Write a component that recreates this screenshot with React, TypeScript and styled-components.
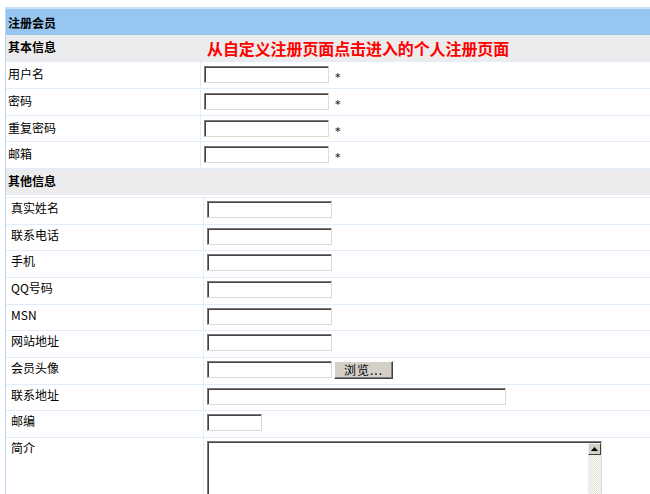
import React from 'react';
import styled, { createGlobalStyle } from 'styled-components';

const GlobalStyle = createGlobalStyle`
  html, body {
    margin: 0;
    padding: 0;
    overflow: hidden;
    background: #ffffff;
  }
  body {
    font-family: "Noto Sans CJK SC", "DejaVu Sans", sans-serif;
    font-size: 12px;
    color: #000;
  }
`;

const LINE = '#e1edfa';

const Frame = styled.div`
  margin: 7px 0 0 5px;
  border-top: 2px solid #c9e0f6;
  border-left: 1px solid #bcd8f3;
`;

const TitleBar = styled.div`
  height: 26px;
  background: #97c7f0;
  padding-left: 2px;
  display: flex;
  align-items: center;
  font-weight: bold;
  font-size: 12px;
`;

const Section = styled.div<{ $gap?: number }>`
  height: 26px;
  background: #ececec;
  display: flex;
  align-items: flex-start;
  margin-bottom: ${p => p.$gap ?? 0}px;
  border-bottom: ${p => (p.$gap ? 'none' : `1px solid ${LINE}`)};
`;

const SectionLabel = styled.div`
  width: 195px;
  padding: 5px 0 0 2px;
  box-sizing: border-box;
  font-weight: bold;
  line-height: 14px;
`;

const Notice = styled.div`
  padding: 3px 0 0 6px;
  color: #ff0000;
  font-size: 16px;
  font-weight: bold;
  line-height: 20px;
  letter-spacing: -0.1px;
`;

const Group = styled.div`
  border-top: 1px solid ${LINE};
`;

const Row = styled.div<{ $h: number }>`
  display: flex;
  box-sizing: border-box;
  height: ${p => p.$h}px;
  border-bottom: 1px solid ${LINE};
`;

const Label = styled.div<{ $w: number; $indent: number; $top: number }>`
  width: ${p => p.$w}px;
  flex-shrink: 0;
  box-sizing: border-box;
  border-right: 1px solid ${LINE};
  padding: ${p => p.$top}px 0 0 ${p => p.$indent}px;
  line-height: 14px;
`;

const Field = styled.div<{ $top: number }>`
  flex: 1;
  display: flex;
  align-items: flex-start;
  gap: 2px;
  padding: ${p => p.$top}px 0 0 3px;
`;

const TextInput = styled.input<{ $w: number }>`
  width: ${p => p.$w}px;
  height: 17px;
  box-sizing: border-box;
  margin: 0;
  padding: 0 2px;
  background: #fff;
  border: 1px solid;
  border-color: #7b7b7b #dedbd3 #dedbd3 #7b7b7b;
  box-shadow: inset 1px 1px 0 #444;
  outline: none;
  font: inherit;
`;

const Star = styled.span`
  margin: 6px 0 0 4px;
  font-size: 11px;
  line-height: 11px;
  font-family: "DejaVu Sans", sans-serif;
`;

const BrowseButton = styled.button`
  width: 59px;
  height: 18px;
  margin: 0;
  padding: 0;
  text-align: center;
  background: #d4d0c8;
  border: 1px solid;
  border-color: #ffffff #404040 #404040 #ffffff;
  box-shadow: inset -1px -1px 0 #808080;
  font-family: "Noto Sans CJK SC", sans-serif;
  font-size: 12px;
  line-height: 14px;
  letter-spacing: 1px;
  color: #000;
`;

const Memo = styled.div`
  width: 395px;
  height: 80px;
  box-sizing: border-box;
  display: flex;
  border: 1px solid;
  border-color: #7b7b7b #dedbd3 #dedbd3 #7b7b7b;
  box-shadow: inset 1px 1px 0 #444;
  background: #fff;
`;

const MemoText = styled.textarea`
  flex: 1;
  border: none;
  outline: none;
  resize: none;
  margin: 1px 0 0 1px;
  padding: 0;
  background: transparent;
  font: inherit;
`;

const ScrollTrack = styled.div`
  width: 13px;
  margin-top: 1px;
  background-color: #f4f2ee;
  background-image: repeating-conic-gradient(#e6e3dc 0 25%, #f8f7f4 0 50%);
  background-size: 2px 2px;
`;

const ScrollUp = styled.div`
  height: 12px;
  box-sizing: border-box;
  background: #d4d0c8;
  border: 1px solid;
  border-color: #f0f0f0 #404040 #404040 #f0f0f0;
  display: flex;
  align-items: center;
  justify-content: center;
`;

type Item = { label: string; input?: number; star?: boolean; browse?: boolean; memo?: boolean };

const basic: Item[] = [
  { label: '用户名', input: 125, star: true },
  { label: '密码', input: 125, star: true },
  { label: '重复密码', input: 125, star: true },
  { label: '邮箱', input: 125, star: true },
];

const other: Item[] = [
  { label: '真实姓名', input: 125 },
  { label: '联系电话', input: 125 },
  { label: '手机', input: 125 },
  { label: 'QQ号码', input: 125 },
  { label: 'MSN', input: 125 },
  { label: '网站地址', input: 125 },
  { label: '会员头像', input: 125, browse: true },
  { label: '联系地址', input: 299 },
  { label: '邮编', input: 55 },
  { label: '简介', memo: true },
];

const FieldContent = ({ item }: { item: Item }) => (
  <>
    {item.memo ? (
      <Memo>
        <MemoText />
        <ScrollTrack>
          <ScrollUp>
            <svg width="7" height="4" viewBox="0 0 7 4">
              <path d="M3.5 0 L7 4 L0 4 Z" fill="#000" />
            </svg>
          </ScrollUp>
        </ScrollTrack>
      </Memo>
    ) : (
      <TextInput $w={item.input ?? 125} />
    )}
    {item.star && <Star>*</Star>}
    {item.browse && <BrowseButton>浏览...</BrowseButton>}
  </>
);

export default function App() {
  return (
    <>
      <GlobalStyle />
      <Frame>
        <TitleBar>注册会员</TitleBar>
        <Section>
          <SectionLabel>其本信息</SectionLabel>
          <Notice>从自定义注册页面点击进入的个人注册页面</Notice>
        </Section>
        {basic.map(item => (
          <Row key={item.label} $h={26.75}>
            <Label $w={195} $indent={2} $top={5}>{item.label}</Label>
            <Field $top={4}>
              <FieldContent item={item} />
            </Field>
          </Row>
        ))}
        <Section $gap={2}>
          <SectionLabel>其他信息</SectionLabel>
        </Section>
        <Group>
          {other.map(item => (
            <Row key={item.label} $h={item.memo ? 120 : 26.67}>
              <Label $w={198} $indent={5} $top={3}>{item.label}</Label>
              <Field $top={3}>
                <FieldContent item={item} />
              </Field>
            </Row>
          ))}
        </Group>
      </Frame>
    </>
  );
}
